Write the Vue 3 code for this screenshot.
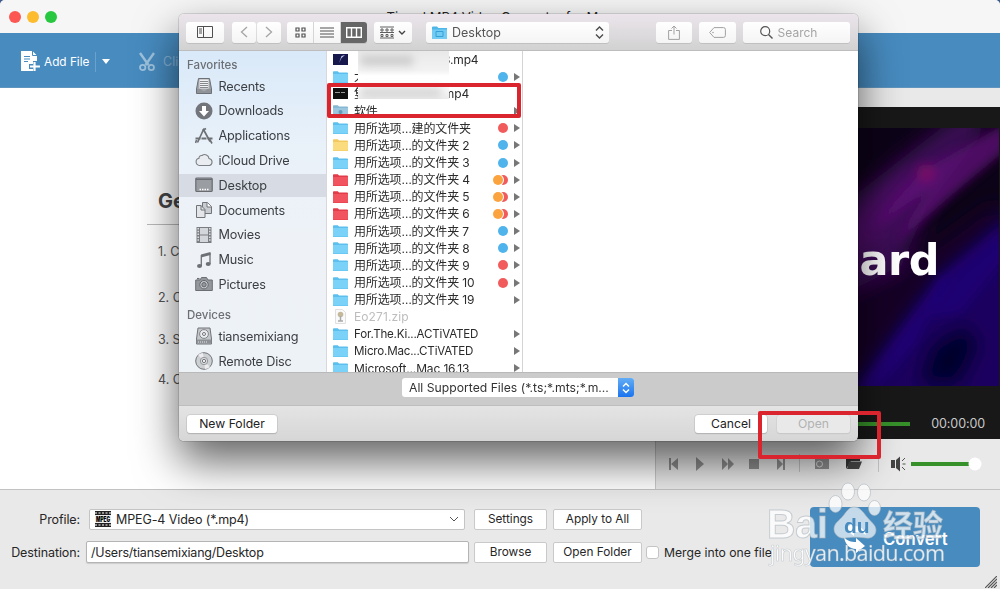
<script setup>
import { ref } from 'vue'

const selected = ref('Desktop')
const destination = ref('/Users/tiansemixiang/Desktop')
const merge = ref(false)

// 侧边栏图标
const icons = {
  recents: '<path d="M3.5 1.5h11l2 10.500v4.500h-15V12z" fill="#a3a6aa" stroke="#6d7074"/><path d="M4.500 2.500h9v9h-9z" fill="#f1f2f3"/><path d="M5 4.500h8M5 6.500h8M5 8.500h8M5 10.500h8" stroke="#85888c"/><path d="M2 12h4l1.500 2h3l1.500-2h4v4H2z" fill="#909398"/>',
  downloads: '<circle cx="9" cy="9" r="8.500" fill="#72757a"/><path d="M7 4h4v5h3l-5 5.500L4 9h3z" fill="#fff"/>',
  apps: '<path d="M9 1.500 2.500 15.500M8.500 2.500l6.500 12" stroke="#6d7074" stroke-width="1.700" fill="none"/><path d="M.5 11.500h17" stroke="#6d7074" stroke-width="1.900" stroke-dasharray="5 1"/><path d="M11 1.500 7.500 3.500M1.500 13l-1 3M14.500 12l2.500 4.500" stroke="#6d7074" stroke-width="1.600"/>',
  cloud: '<path d="M4.500 14.500a3.700 3.700 0 0 1-.5-7.300 2.500 2.500 0 0 1 3-2.700 4.300 4.300 0 0 1 7 3 3.600 3.600 0 0 1 .5 7z" fill="#e9edf1" stroke="#7c7f83" stroke-width="1.100"/>',
  desktop: '<rect x=".8" y="2" width="16.400" height="13.500" rx="1" fill="#9a9da2" stroke="#686b70" stroke-width="1.200"/><path d="M1 3.500h16" stroke="#696c71"/><path d="M4.500 13.500h9" stroke="#fff" stroke-width="1.500" stroke-dasharray="1.500 1"/>',
  documents: '<path d="M7.500 1.500h5l4 4v7h-9z" fill="#c9ccd0" stroke="#717479"/><path d="M12 1.500V6h4.500" fill="#fff" stroke="#717479"/><path d="M1.500 4.500h4.500l4 4v8h-8.500z" fill="#e3e5e8" stroke="#717479"/><path d="M6 4.500V9h4" fill="none" stroke="#717479"/>',
  movies: '<rect x="1.500" y="1" width="15" height="16" fill="#7a7d82"/><rect x="5" y="2" width="8" height="6.500" fill="#d3d6da"/><rect x="5" y="9.500" width="8" height="6.500" fill="#d3d6da"/><path d="M3.200 2v14M14.800 2v14" stroke="#e1e3e6" stroke-width="1.500" stroke-dasharray="1.500 1.300"/>',
  music: '<path d="M6 3.500 15.500 1v3L6 6.500z" fill="#6d7074"/><path d="M6.300 4v11M15 2v11" stroke="#6d7074" stroke-width="1.300"/><ellipse cx="4.500" cy="15" rx="2.500" ry="2" fill="#6d7074"/><ellipse cx="13.200" cy="13" rx="2.500" ry="2" fill="#6d7074"/>',
  pictures: '<path d="M.7 5H5l1.500-2.500h5L13 5h4.300v10.500H.7z" fill="#94979c" stroke="#6b6e73"/><circle cx="9" cy="9.700" r="4.200" fill="#c8cbce" stroke="#64676c"/><circle cx="9" cy="9.700" r="2.200" fill="#94979c" stroke="#64676c"/><path d="M2 3.700h2.500" stroke="#6b6e73" stroke-width="1.500"/>',
  drive: '<path d="M3 1h12l1.500 11v5h-15v-5z" fill="#c4c7ca" stroke="#707378"/><circle cx="9" cy="7" r="4.400" fill="#ebecee" stroke="#808388"/><circle cx="9" cy="7" r="1.500" fill="#fff" stroke="#707378"/><path d="M1.500 12.500h15v4h-15z" fill="#8d9095"/><path d="M3 15h9" stroke="#e6e7e9" stroke-dasharray="1 1"/>',
  disc: '<circle cx="9" cy="9" r="8.300" fill="#cdd0d3" stroke="#707378"/><path d="M9 9 3 3a8 8 0 0 1 5-2zM9 9l6 6a8 8 0 0 1-5 2z" fill="#ececee"/><circle cx="9" cy="9" r="3.700" fill="#d9dbdd" stroke="#94979b"/><circle cx="9" cy="9" r="1.600" fill="#fff" stroke="#707378"/>'
}

const favorites = [
  { name: 'Recents', icon: 'recents' },
  { name: 'Downloads', icon: 'downloads' },
  { name: 'Applications', icon: 'apps' },
  { name: 'iCloud Drive', icon: 'cloud' },
  { name: 'Desktop', icon: 'desktop' },
  { name: 'Documents', icon: 'documents' },
  { name: 'Movies', icon: 'movies' },
  { name: 'Music', icon: 'music' },
  { name: 'Pictures', icon: 'pictures' }
]
const devices = [
  { name: 'tiansemixiang', icon: 'drive' },
  { name: 'Remote Disc', icon: 'disc' }
]

// tags: b 蓝 r 红 o 橙
const files = [
  { type: 'video', name: '', tail: '3.mp4', gap: 89 },
  { type: 'blue', name: '大', tags: ['b'], dir: true },
  { type: 'dark', name: '隻', tail: 'mp4', gap: 78 },
  { type: 'drop', name: '软件', dir: true },
  { type: 'blue', name: '用所选项…建的文件夹', tags: ['r'], dir: true },
  { type: 'yellow', name: '用所选项…的文件夹 2', tags: ['b'], dir: true },
  { type: 'blue', name: '用所选项…的文件夹 3', tags: ['b'], dir: true },
  { type: 'red', name: '用所选项…的文件夹 4', tags: ['o', 'r'], dir: true },
  { type: 'red', name: '用所选项…的文件夹 5', tags: ['o', 'r'], dir: true },
  { type: 'red', name: '用所选项…的文件夹 6', tags: ['o', 'r'], dir: true },
  { type: 'blue', name: '用所选项…的文件夹 7', tags: ['b'], dir: true },
  { type: 'blue', name: '用所选项…的文件夹 8', tags: ['b'], dir: true },
  { type: 'blue', name: '用所选项…的文件夹 9', tags: ['r'], dir: true },
  { type: 'blue', name: '用所选项…的文件夹 10', tags: ['r'], dir: true },
  { type: 'blue', name: '用所选项…的文件夹 19', dir: true },
  { type: 'zip', name: 'Eo271.zip' },
  { type: 'blue', name: 'For.The.Ki...ACTiVATED', dir: true, tight: true },
  { type: 'blue', name: 'Micro.Mac...CTiVATED', dir: true, tight: true },
  { type: 'blue', name: 'Microsoft...Mac 16.13', dir: true }
]

const folderColors = {
  blue: ['#5cbfee', '#7bd2f8'],
  drop: ['#86b7d3', '#9ac6df'],
  yellow: ['#f2c95f', '#fadb7d'],
  red: ['#e23b49', '#f2545f']
}

const steps = ['1. Click', '2. Choose', '3. Select', '4. Click']
</script>

<template>
  <div class="window">
    <header class="titlebar">
      <div class="lights"><i class="close"></i><i class="min"></i><i class="max"></i></div>
      <span class="title">Tipard MP4 Video Converter for Mac</span>
    </header>

    <nav class="toolbar">
      <svg class="add-icon" width="20" height="21" viewBox="0 0 20 21">
        <path d="M0 0h11.500l4.500 4.500V10h-4v3H8v5h4v2H0z" fill="#fff" />
        <path d="M11.500 0v4.500H16" fill="none" stroke="#478bbf" />
        <path d="M3 5.500h6M3 8h6M3 10.500h4" stroke="#478bbf" stroke-width="1.200" />
        <path d="M13.500 11v9M9 15.500h10" stroke="#fff" stroke-width="2.200" />
      </svg>
      <span class="add">Add File</span>
      <span class="sep"></span>
      <span class="caret"></span>
      <svg class="clip-icon" width="16" height="20" viewBox="0 0 16 20">
        <path d="M1 1l8.500 12M15 1L6.500 13" stroke="#9fc3de" stroke-width="2.400" />
        <circle cx="3.700" cy="15.500" r="2.700" fill="none" stroke="#9fc3de" stroke-width="1.800" />
        <circle cx="12.300" cy="15.500" r="2.700" fill="none" stroke="#9fc3de" stroke-width="1.800" />
      </svg>
      <span class="clip">Clip</span>
    </nav>

    <main class="content">
      <section class="guide">
        <h2>Getting Started</h2>
        <p v-for="s in steps" :key="s">{{ s }}</p>
      </section>
      <section class="player">
        <div class="screen">
          <div class="picture">
            <svg width="143" height="258" viewBox="0 0 143 258">
              <defs>
                <filter id="soft" x="-30%" y="-30%" width="160%" height="160%"><feGaussianBlur stdDeviation="10" /></filter>
                <filter id="edge" x="-30%" y="-30%" width="160%" height="160%"><feGaussianBlur stdDeviation="5" /></filter>
              </defs>
              <rect width="143" height="258" fill="#0d0318" />
              <g filter="url(#soft)">
                <path d="M-30 90L85 0 115-20 130 0 70 80 40 150-30 170z" fill="#3a0c55" />
                <path d="M-20 110L55 40 85 35 30 100-20 140z" fill="#500a68" />
                <path d="M-20 170L60 130 143 70V110L40 230-20 290z" fill="#180528" />
                <path d="M0 262L85 150 130 110 170 70V290H0z" fill="#1d0560" />
                <path d="M60 258L75 215 110 195 125 215 105 258z" fill="#04002c" />
              </g>
              <g filter="url(#edge)">
                <path d="M15 100L60 50 80 35 150-5V22L95 68 40 115 60 80 75 60z" fill="#600b78" opacity=".75" />
                <circle cx="70" cy="45" r="9" fill="#800f66" opacity=".75" />
                <path d="M0 262L45 200 82 150 95 145 60 215 20 262z" fill="#20058a" opacity=".5" />
                <path d="M82 150L150 95V130L105 185 75 190z" fill="#1d0580" opacity=".55" />
              </g>
            </svg>
            <span>ard</span>
          </div>
          <div class="progress"><b></b><time>00:00:00</time></div>
        </div>
        <div class="controls">
          <svg width="344" height="50" viewBox="1 0 344 50">
            <g fill="#909090">
              <path d="M14 19h2v12h-2zM23 19v12l-7-6zM41 18l8 7-8 7zM67 19l6 6-6 6zM73 19l6 6-6 6zM94 20h10v10H94zM122 19l6 6-6 6zM128 19h2v12h-2z" />
              <path d="M160 20h4l1-2h4l1 2h4v10h-14z" />
            </g>
            <circle cx="164.500" cy="25" r="3" fill="none" stroke="#dedede" />
            <path d="M144.500 15v18M223.500 15v18" stroke="#c2c2c2" />
            <path d="M191 30V18h5l1 2h8v2h-9z" fill="#333" />
            <path d="M194 22.500h13l-3 7.500h-12z" fill="#444" />
            <path d="M236 21h4v8h-4zM241 21l4-3.500v15l-4-3.500z" fill="#444" />
            <path d="M247 22l3-3M247.500 25h3M247 28l3 3" stroke="#555" />
            <path d="M256 25h62" stroke="#36912a" stroke-width="4" />
            <circle cx="320" cy="25" r="6.500" fill="#fff" />
          </svg>
        </div>
      </section>
    </main>

    <footer class="settings">
      <div class="line">
        <label>Profile:</label>
        <div class="select">
          <svg width="16" height="16" viewBox="0 0 16 16">
            <rect width="16" height="16" fill="#222" />
            <path d="M0 2h16M0 14h16" stroke="#bbb" stroke-width="1.500" stroke-dasharray="2 1.500" />
            <rect y="4" width="16" height="8" fill="#eee" />
            <text x="8" y="10.500" text-anchor="middle" textLength="14" lengthAdjust="spacingAndGlyphs" font-size="7" font-weight="900">MPEG</text>
          </svg>
          <span>MPEG-4 Video (*.mp4)</span>
          <svg class="down" width="10" height="6" viewBox="0 0 10 6"><path d="M1 1l4 4 4-4" fill="none" stroke="#555" /></svg>
        </div>
        <button class="w1">Settings</button>
        <button class="w2">Apply to All</button>
      </div>
      <div class="line">
        <label>Destination:</label>
        <input v-model="destination" type="text" />
        <button class="w1">Browse</button>
        <button class="w2">Open Folder</button>
        <i class="check" @click="merge = !merge"></i>
        <span class="merge">Merge into one file</span>
      </div>
      <div class="convert">
        <svg width="24" height="32" viewBox="0 0 24 32">
          <path d="M1 8l9-7v4c7 0 11 4 12 9-4-3-7-3-12-3v4z" fill="#fff" />
          <path d="M0 16c3 4 7 5 12 5v-4l9 8-9 7v-4C5 28 1 23 0 16z" fill="#fff" />
        </svg>
        <span>Convert</span>
      </div>
      <svg class="grip" width="12" height="12" viewBox="0 0 12 12">
        <path d="M0 12L12 0M3 12l9-9M6 12l6-6M9 12l3-3" stroke="#555" stroke-width="1.200" />
      </svg>
    </footer>

    <!-- 文件选择对话框 -->
    <div class="dialog">
      <div class="bar">
        <div class="btn b-side">
          <svg width="16" height="12" viewBox="0 0 16 12"><path d="M.5.500h15v11H.5zM6.500.500v11" fill="none" stroke="#4f4f4f" /><path d="M2 3h3M2 5h3M2 7h3" stroke="#4f4f4f" /></svg>
        </div>
        <div class="btn b-nav"><svg width="8" height="12" viewBox="0 0 8 12"><path d="M7 1L1.500 6 7 11" fill="none" stroke="#a5a5a5" stroke-width="1.300" /></svg></div>
        <div class="btn b-nav next"><svg width="8" height="12" viewBox="0 0 8 12"><path d="M1 1l5.500 5L1 11" fill="none" stroke="#a5a5a5" stroke-width="1.300" /></svg></div>
        <div class="btn b-view">
          <span><svg width="11" height="11" viewBox="0 0 11 11"><path d="M1 1h3v3H1zM7 1h3v3H7zM1 7h3v3H1zM7 7h3v3H7z" fill="none" stroke="#505050" stroke-width="1.200" /></svg></span>
          <span><svg width="14" height="11" viewBox="0 0 14 11"><path d="M0 1h14M0 4h14M0 7h14M0 10h14" stroke="#505050" stroke-width="1.200" /></svg></span>
          <span class="on"><svg width="16" height="11" viewBox="0 0 16 11"><path d="M.7.700h14.600v9.600H.7zM5.500.700v9.600M10.500.700v9.600" fill="none" stroke="#fff" stroke-width="1.400" /></svg></span>
        </div>
        <div class="btn b-arr">
          <svg width="26" height="13" viewBox="0 0 26 13">
            <path d="M0 1h14M0 6.500h14M0 12h14" stroke="#606060" />
            <path d="M1 3h2v2H1zM6 3h2v2H6zM11 3h2v2h-2zM1 8.500h2v2H1zM6 8.500h2v2H6zM11 8.500h2v2h-2z" fill="none" stroke="#606060" />
            <path d="M19 5l3 3 3-3" fill="none" stroke="#444" stroke-width="1.400" />
          </svg>
        </div>
        <div class="btn b-path">
          <svg width="15" height="13" viewBox="0 0 15 13"><path d="M0 1.500Q0 .5 1 .5h4l1.500 1.500H15v11H0z" fill="#4fb7e8" /><path d="M0 3.500h15V13H0z" fill="#72cbf3" /><path d="M4 5.500h7v5H4z" fill="none" stroke="#35a0d5" /></svg>
          <span>Desktop</span>
          <svg width="9" height="13" viewBox="0 0 9 13"><path d="M1 4.500L4.500 1 8 4.500M1 8.500L4.500 12 8 8.500" fill="none" stroke="#4a4a4a" stroke-width="1.400" /></svg>
        </div>
        <div class="btn b-share">
          <svg width="12" height="15" viewBox="0 0 12 15"><path d="M4 5.500H.6v8.900h10.800V5.500H8M6 9.500V1M3.500 3.500L6 1l2.500 2.500" fill="none" stroke="#a2a2a2" /></svg>
        </div>
        <div class="btn b-tag">
          <svg width="17" height="11" viewBox="0 0 17 11"><path d="M5 .6h9.500q1.900 0 1.900 1.900v6q0 1.900-1.900 1.900H5L.7 5.500z" fill="none" stroke="#a2a2a2" /><circle cx="4" cy="5.500" r=".8" fill="#a2a2a2" /></svg>
        </div>
        <div class="btn b-search">
          <svg width="13" height="13" viewBox="0 0 13 13"><circle cx="5.200" cy="5.200" r="4.500" fill="none" stroke="#555" stroke-width="1.200" /><path d="M8.500 8.500l4 4" stroke="#555" stroke-width="1.400" /></svg>
          <span>Search</span>
        </div>
      </div>

      <div class="body">
        <aside>
          <h4>Favorites</h4>
          <div v-for="f in favorites" :key="f.name" class="item" :class="{ active: selected === f.name }" @click="selected = f.name">
            <svg width="18" height="18" viewBox="0 0 18 18" v-html="icons[f.icon]"></svg>
            <span>{{ f.name }}</span>
          </div>
          <h4 class="second">Devices</h4>
          <div v-for="d in devices" :key="d.name" class="item">
            <svg width="18" height="18" viewBox="0 0 18 18" v-html="icons[d.icon]"></svg>
            <span>{{ d.name }}</span>
          </div>
        </aside>

        <div class="files">
          <div v-for="(f, i) in files" :key="i" class="file" :class="{ off: f.type === 'zip', tight: f.tight }">
            <svg v-if="folderColors[f.type]" width="15" height="12" viewBox="0 0 15 12">
              <path d="M0 1Q0 .3.8.3h4L6 1.500h8q1 0 1 1V12H0z" :fill="folderColors[f.type][0]" />
              <path d="M0 3h15v8.500H0z" :fill="folderColors[f.type][1]" />
              <circle v-if="f.type === 'drop'" cx="7.500" cy="7" r="2" fill="#6499b7" />
            </svg>
            <svg v-else-if="f.type === 'zip'" width="15" height="15" viewBox="0 0 15 15">
              <path d="M2.500.500h7l3 3v11h-10z" fill="#fafafa" stroke="#e0e0e0" />
              <circle cx="7.500" cy="5.500" r="2.800" fill="#c5b99b" /><path d="M7.500 7v5M5 12h5" stroke="#aaa" stroke-width="1.500" />
            </svg>
            <svg v-else width="15" height="11" viewBox="0 0 15 11">
              <rect width="15" height="11" :fill="f.type === 'video' ? '#17184c' : '#101010'" />
              <path v-if="f.type === 'video'" d="M6 9l2.500-7L12 1 8.500 4z" fill="#c9ccf5" />
              <path v-else d="M2 4.500h5M8 4.500h4" stroke="#999" />
            </svg>
            <span class="name">{{ f.name }}</span>
            <span v-if="f.tail" class="tail" :style="{ marginLeft: f.gap + 'px' }">{{ f.tail }}</span>
            <span class="tags"><i v-for="t in f.tags" :key="t" :class="t"></i></span>
            <b v-if="f.dir" class="arrow"></b>
          </div>
          <div class="smudge"><i></i><i></i></div>
        </div>
      </div>

      <div class="filter">
        <div class="popup">
          <span>All Supported Files (*.ts;*.mts;*.m...</span>
          <em><svg width="8" height="12" viewBox="0 0 8 12"><path d="M1 4.500l3-3 3 3M1 7.500l3 3 3-3" fill="none" stroke="#fff" stroke-width="1.500" /></svg></em>
        </div>
      </div>
      <div class="actions">
        <button class="new">New Folder</button>
        <button class="cancel">Cancel</button>
        <button class="open" disabled>Open</button>
      </div>
    </div>

    <div class="mark mark-file"></div>
    <div class="mark mark-open"></div>

    <svg class="watermark" width="190" height="92" viewBox="0 0 190 92">
      <g fill="#fff" fill-opacity=".75" stroke="#a9b4bc" stroke-opacity=".6">
        <ellipse cx="70.500" cy="24" rx="6.500" ry="8.500" />
        <ellipse cx="83" cy="11.500" rx="6.500" ry="8.500" />
        <ellipse cx="99" cy="12.500" rx="6.500" ry="8.500" />
        <ellipse cx="109.500" cy="28" rx="6" ry="7.500" />
        <path fill-opacity=".68" d="M89 27c6 0 9 5 13 10s9 8 9 13-4 9-10 8-16-1-21 0-11-3-11-9 5-8 9-13 6-9 11-9z" />
        <text x="2" y="58" class="wm-b" textLength="61" lengthAdjust="spacingAndGlyphs">Bai</text>
        <text x="118" y="56" class="wm-cn">经验</text>
      </g>
      <text x="79" y="53" class="wm-du">du</text>
      <text x="5" y="81" class="wm-url" textLength="175">jingyan.baidu.com</text>
    </svg>
  </div>
</template>

<style>
body {
  margin: 0;
  background: #3d5c8c;
  overflow: hidden;
}
</style>

<style scoped>
* {
  box-sizing: border-box;
}

.window {
  position: relative;
  width: 1000px;
  height: 589px;
  display: flex;
  flex-direction: column;
  overflow: hidden;
  border-radius: 5px 5px 0 0;
  background: #e9e9e9;
  font-family: Inter, "Noto Sans CJK SC", sans-serif;
  font-size: 12.5px;
  color: #262626;
}

svg {
  display: block;
  flex: none;
}

.titlebar {
  height: 33px;
  flex: none;
  display: flex;
  align-items: center;
  padding-left: 8.5px;
  background: #f6f6f6;
}

.lights {
  display: flex;
  gap: 6px;
  width: 378px;
}

.lights i {
  width: 12px;
  height: 12px;
  border-radius: 50%;
}

.close { background: #fc5753; }
.min { background: #fdbc2e; }
.max { background: #27c83f; }

.title {
  font-size: 13px;
  white-space: nowrap;
}

.toolbar {
  height: 55px;
  flex: none;
  display: flex;
  align-items: center;
  padding: 3px 0 0 21px;
  background: #478bbf;
  border-bottom: 1px solid #5f95bf;
  color: #fff;
}

.add {
  margin-left: 3px;
  width: 51px;
  font-size: 11.8px;
  white-space: nowrap;
}

.sep {
  width: 1px;
  height: 20px;
  background: #6ba2cc;
}

.caret {
  margin: 0 29px 0 6px;
  border: 4px solid transparent;
  border-top: 5px solid #fff;
  border-bottom: 0;
}

.clip {
  margin-left: 8px;
  color: #83b2d6;
}

.content {
  height: 401px;
  flex: none;
  display: flex;
}

.guide {
  width: 655px;
  background: #fff;
  padding: 99px 0 0 147px;
}

.guide h2 {
  margin: 0;
  padding: 2px 0 0 11px;
  height: 38px;
  border-bottom: 1px solid #bbb;
  font-size: 20px;
  line-height: 24px;
  color: #444;
}

.guide p {
  margin: 18px 0 0 11px;
  line-height: 18px;
  color: #555;
}

.guide p:nth-of-type(2) {
  margin-top: 28px;
}

.guide p:nth-of-type(3) {
  margin-top: 24px;
}

.guide p:nth-of-type(4) {
  margin-top: 22px;
}

.player {
  width: 345px;
  padding-top: 19px;
  border-left: 1px solid #c9c9c9;
}

.screen {
  height: 332px;
  padding-top: 21px;
  background: #181818;
}

.picture {
  position: relative;
  height: 258px;
  display: flex;
  justify-content: flex-end;
  margin-right: 1px;
  padding: 107px 60px 0 0;
  background: #0d0318;
}

.picture svg {
  position: absolute;
  right: 0;
  top: 0;
}

.picture span {
  position: relative;
  font-family: "DejaVu Sans", sans-serif;
  font-size: 43px;
  line-height: 50px;
  font-weight: bold;
  letter-spacing: -0.5px;
  color: #fff;
}

.progress {
  height: 53px;
  display: flex;
  align-items: center;
  justify-content: flex-end;
  padding: 22px 15px 0 0;
}

.progress b {
  width: 120px;
  height: 4px;
  margin-right: 21px;
  background: #36912a;
}

.progress time {
  line-height: 16px;
  width: 54px;
  font-size: 12.5px;
  text-align: right;
  white-space: nowrap;
  letter-spacing: -0.1px;
  color: #c9c9c9;
}

.settings {
  position: relative;
  flex: 1;
  padding-top: 18px;
  border-top: 1px solid #c2c2c2;
  background: #e9e9e9;
}

.line {
  height: 22px;
  margin-bottom: 11px;
  display: flex;
  align-items: center;
}

.line label {
  width: 80px;
  text-align: right;
  letter-spacing: -0.1px;
}

.select {
  width: 376px;
  height: 21px;
  margin: 0 9px;
  padding: 0 5px;
  display: flex;
  align-items: center;
  border: 1px solid #c4c4c4;
  border-radius: 2px;
  background: #fff;
}

.select span {
  flex: 1;
  margin-left: 5px;
  letter-spacing: -0.1px;
}

.line input {
  width: 383px;
  height: 22px;
  margin: 0 5px 0 6px;
  padding: 0 4px;
  border: 1px solid #b4b4b4;
  border-radius: 2px;
  box-shadow: 0 1px 1px #ccc;
  background: #fff;
  font: inherit;
  letter-spacing: -0.2px;
  color: inherit;
}

.line button {
  height: 21px;
  padding: 0;
  border: 1px solid #c9c9c9;
  border-radius: 2px;
  background: #fff;
  font: inherit;
  font-size: 11.8px;
  color: inherit;
}

.line .w1 {
  width: 73px;
  margin-right: 6px;
}

.line .select + .w1 {
  margin-left: 0;
}

.line .w2 {
  width: 89px;
}

.check {
  width: 13px;
  height: 13px;
  margin: 0 5px 0 4px;
  border: 1px solid #c4c4c4;
  border-radius: 3px;
  background: #fff;
}

.merge {
  font-size: 12.2px;
}

.convert {
  position: absolute;
  left: 810px;
  top: 17px;
  width: 170px;
  height: 60px;
  display: flex;
  align-items: center;
  padding-left: 34px;
  border-radius: 4px;
  background: #478bbf;
  color: #fff;
}

.convert span {
  margin: 3px 0 0 15px;
  font-size: 16.7px;
  font-weight: 600;
}

.grip {
  position: absolute;
  right: 3px;
  bottom: 1px;
}

/* 对话框 */
.dialog {
  position: absolute;
  left: 179px;
  top: 14px;
  width: 679px;
  height: 427px;
  display: flex;
  flex-direction: column;
  border-radius: 5px;
  overflow: hidden;
  box-shadow: 0 0 0 1px rgba(0, 0, 0, .12), 0 20px 44px rgba(0, 0, 0, .62);
  color: #333;
}

.bar {
  height: 37px;
  flex: none;
  display: flex;
  align-items: center;
  padding-left: 7px;
  background: linear-gradient(#ebe5eb, #d2d2d2);
  border-bottom: 1px solid #bdbdbd;
}

.btn {
  height: 21px;
  display: flex;
  align-items: center;
  justify-content: center;
  border-radius: 3px;
  background: linear-gradient(#fff, #f4f4f4);
  box-shadow: 0 1px 0 #c0c0c0;
}

.b-side { width: 38px; }
.b-nav { width: 24px; margin-left: 8px; }
.b-nav.next { margin-left: 1px; }
.b-view { width: 80px; margin-left: 6px; overflow: hidden; }
.b-arr { width: 38px; margin-left: 7px; }
.b-path { width: 183px; margin-left: 14px; padding: 0 5px 0 6px; }
.b-share { width: 36px; margin-left: 47px; }
.b-tag { width: 37px; margin-left: 7px; }
.b-search { width: 107px; margin-left: 7px; padding-right: 16px; color: #a4a4a4; }

.b-view span {
  flex: 1;
  height: 21px;
  display: flex;
  align-items: center;
  justify-content: center;
  border-right: 1px solid #d5d5d5;
}

.b-view .on {
  border: 0;
  background: #666;
}

.b-path span {
  flex: 1;
  margin-left: 5px;
  font-size: 12.5px;
  color: #555;
}

.b-search span {
  margin-left: 5px;
  font-size: 12px;
}

.body {
  height: 321px;
  flex: none;
  display: flex;
  background: #fff;
}

aside {
  width: 148px;
  height: 321px;
  overflow: hidden;
  border-right: 1px solid #d6d8da;
  background: linear-gradient(#d9e9f9, #e9f1f9 30%, #eef2f7 60%, #edf2f6);
}

aside h4 {
  margin: 0;
  height: 22.7px;
  padding: 5px 0 0 8px;
  font-size: 11.5px;
  line-height: 18px;
  font-weight: 500;
  color: #6c6f73;
}

aside .second {
  margin-top: 9px;
  height: 18px;
  padding-top: 0;
}

.item {
  height: 24.8px;
  display: flex;
  align-items: center;
  padding-left: 16px;
  font-size: 12.7px;
  color: #3b3e42;
}

.item span {
  margin-left: 5.5px;
  letter-spacing: -0.2px;
}

.item.active {
  background: linear-gradient(transparent 1px, #d6dbe4 1px, #d6dbe4 23.800px, transparent 23.800px);
}

.files {
  position: relative;
  width: 196px;
  height: 321px;
  overflow: hidden;
  border-right: 1px solid #d4d4d4;
}

.file {
  height: 17.17px;
  display: flex;
  align-items: center;
  padding: 0 2px 0 6px;
  font-size: 12px;
  line-height: 17px;
  letter-spacing: -0.15px;
  white-space: nowrap;
  color: #2b2b2b;
}

.file.off {
  color: #bdbdbd;
  letter-spacing: 0.1px;
}

.file.tight {
  font-size: 11.6px;
  letter-spacing: -0.2px;
}

.name {
  margin-left: 6px;
}

.tags {
  flex: 1;
  display: flex;
  justify-content: flex-end;
  margin-right: 6px;
}

.tags i {
  width: 10px;
  height: 10px;
  border-radius: 50%;
}

.tags .b { background: #4fb4ec; }
.tags .r { background: #f25b5b; }

.tags .o {
  background: #fba43f;
  margin-right: -5px;
  z-index: 1;
  box-shadow: 0 0 0 1px #fff;
}

.arrow {
  border: 4px solid transparent;
  border-left: 6px solid #777;
  border-right: 0;
}

.smudge {
  position: absolute;
  left: 31px;
  top: 0;
  width: 91px;
  height: 48px;
  overflow: hidden;
  background: linear-gradient(#e9e9e9, #f2f2f2 40%, #fff 52%, #fff 65%, #ededed);
}

.smudge i {
  position: absolute;
  left: 3px;
  top: 5px;
  width: 52px;
  height: 9px;
  background: #c8c8c8;
  filter: blur(4px);
}

.smudge i + i {
  top: 37px;
  width: 80px;
  background: #d3d3d3;
}

.filter {
  height: 33px;
  flex: none;
  padding: 5px 0 0 223px;
  background: #cbcbcb;
  border-top: 1px solid #b9b9b9;
}

.popup {
  width: 232px;
  height: 19px;
  display: flex;
  align-items: center;
  border-radius: 3px;
  overflow: hidden;
  background: #fff;
}

.popup span {
  flex: 1;
  padding-left: 7px;
  font-size: 12.2px;
  white-space: nowrap;
}

.popup em {
  width: 16px;
  height: 19px;
  display: flex;
  align-items: center;
  justify-content: center;
  background: linear-gradient(#63adf5, #1b74ee);
}

.actions {
  flex: 1;
  display: flex;
  align-items: center;
  padding: 0 8px;
  background: linear-gradient(#e4e4e4, #d6d6d6);
  border-top: 1px solid #bebebe;
}

.actions button {
  height: 18px;
  padding: 0;
  border: 0;
  border-radius: 3px;
  background: #fff;
  box-shadow: 0 0 0 .5px #bbb, 0 1px 1px #aaa;
  font: inherit;
  font-size: 12.2px;
  color: #222;
}

.actions .new { width: 90px; }
.actions .cancel { width: 72px; margin-left: auto; }

.actions .open {
  width: 73px;
  margin-left: 10px;
  background: #e9e9e9;
  box-shadow: 0 0 0 .5px #ccc, 0 1px 1px #c4c4c4;
  color: #b2b2b2;
}

.mark {
  position: absolute;
  border: 4px solid #da242e;
  border-radius: 2px;
}

.mark-file {
  left: 327px;
  top: 83px;
  width: 194px;
  height: 35px;
}

.mark-open {
  left: 758px;
  top: 411px;
  width: 123px;
  height: 48px;
}

.watermark {
  position: absolute;
  left: 765px;
  top: 480px;
}

.wm-b {
  font: bold 41px "Liberation Sans", sans-serif;
}

.wm-cn {
  font: bold 30px "Noto Sans CJK SC", sans-serif;
}

.wm-du {
  font: bold 21px "Liberation Sans", sans-serif;
  fill: #478bbf;
}

.wm-url {
  font: 21.5px "Noto Sans", sans-serif;
  fill: rgba(255, 255, 255, .85);
  stroke: rgba(160, 170, 178, .5);
  stroke-width: .6px;
}
</style>
